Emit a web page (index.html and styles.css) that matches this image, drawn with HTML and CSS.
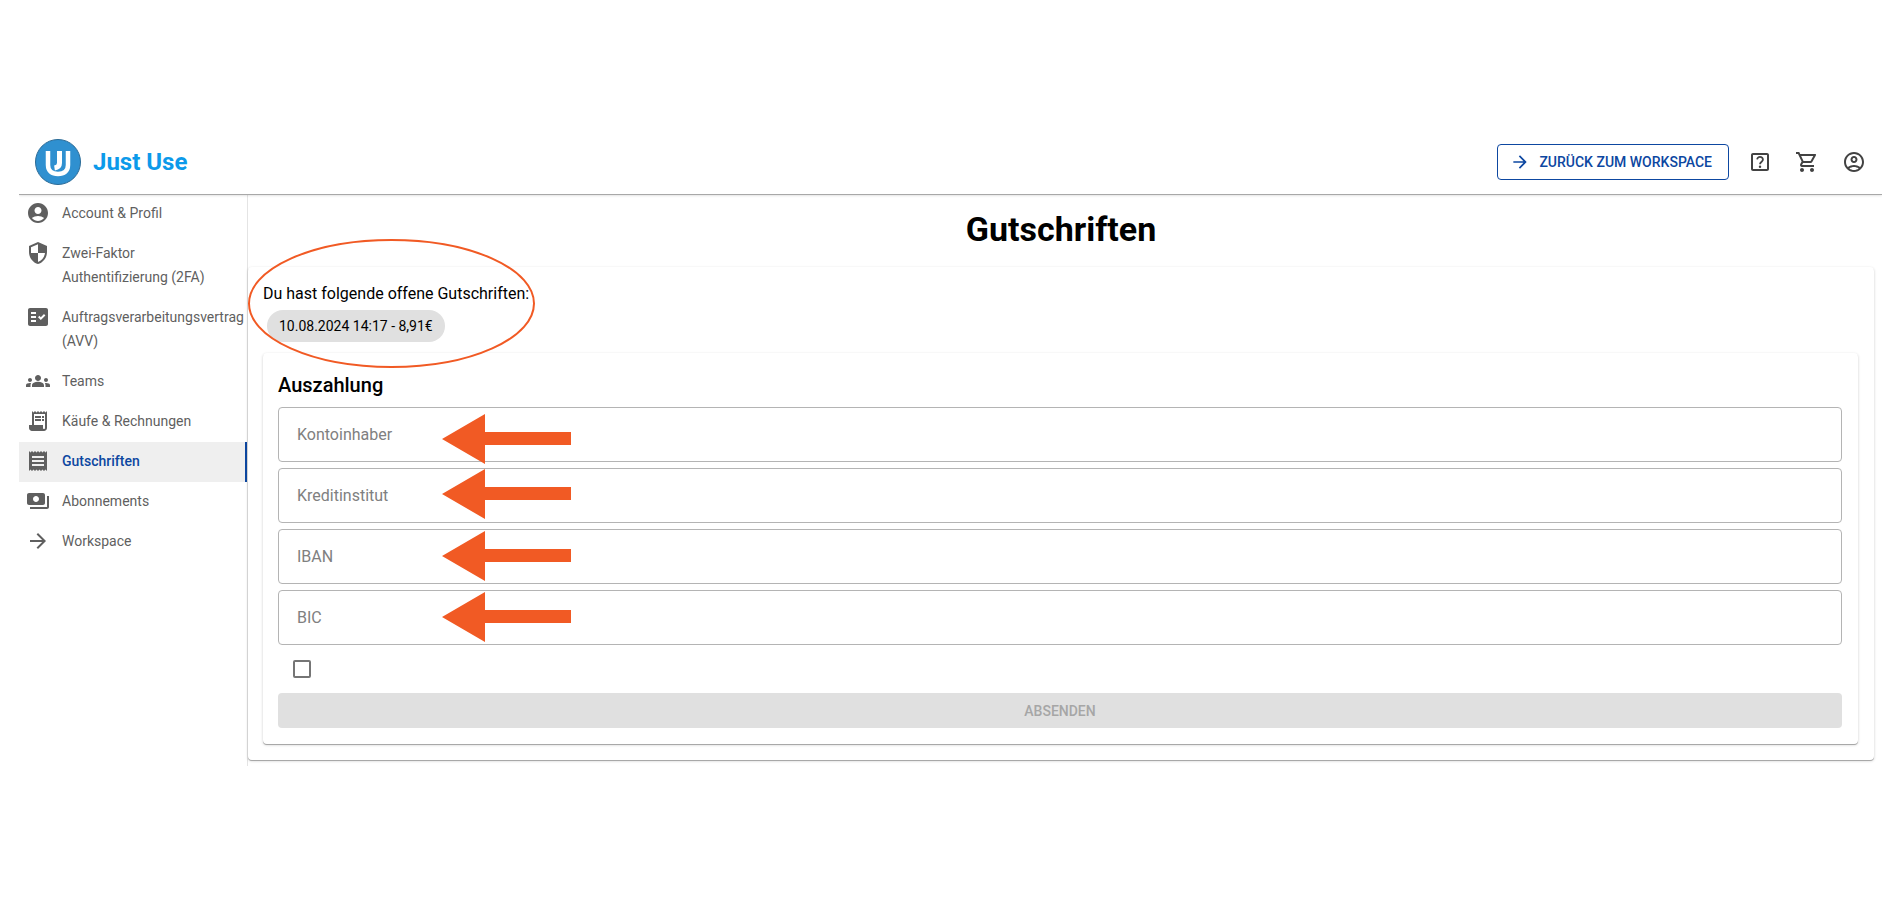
FILE: index.html
```
<!DOCTYPE html>
<html lang="de">
<head>
    <meta charset="UTF-8">
    <meta name="viewport" content="width=device-width, initial-scale=1.0">
    <title>Just Use - Gutschriften</title>
    <link rel="stylesheet" href="styles.css">
</head>
<body>

<header class="topbar">
    <a class="brand" href="#">
        <svg class="logo" viewBox="0 0 46 46" aria-hidden="true">
            <circle cx="23" cy="23" r="22.5" fill="#2f90d0" stroke="#2b6a96"/>
            <path d="M13 12v14c0 6 4 9 10 9s10-3 10-9V12" fill="none" stroke="#fff" stroke-width="4.500"/>
            <path d="M24.500 12v12c0 3-1.500 4.500-5 5" fill="none" stroke="#fff" stroke-width="5"/>
        </svg>
        <span class="brand-name">Just Use</span>
    </a>
    <div class="topbar-actions">
        <button class="back-button" type="button">
            <svg class="icon-small" viewBox="0 0 24 24"><path d="m12 4-1.410 1.410L16.170 11H4v2h12.170l-5.580 5.590L12 20l8-8z"/></svg>
            ZURÜCK ZUM WORKSPACE
        </button>
        <button class="icon-button" type="button" aria-label="Hilfe">
            <svg class="icon" viewBox="0 0 24 24"><path d="M19 3H5c-1.100 0-2 .9-2 2v14c0 1.100.9 2 2 2h14c1.100 0 2-.9 2-2V5c0-1.100-.9-2-2-2zm0 16H5V5h14v14zM12 15.500a1.200 1.200 0 1 0 0 2.500 1.200 1.200 0 0 0 0-2.500zM12 6c-2 0-3.500 1.300-3.700 3.200l1.700.4C10.100 8.500 10.900 7.700 12 7.700s2 .8 2 1.800c0 1.600-2.800 1.900-2.800 4.800H13c0-2 2.800-2.400 2.800-4.900C15.800 7.400 14.100 6 12 6z"/></svg>
        </button>
        <button class="icon-button" type="button" aria-label="Warenkorb">
            <svg class="icon" viewBox="0 0 24 24"><path d="M15.550 13c.75 0 1.410-.41 1.750-1.030l3.580-6.490A.996.996 0 0 0 20.010 4H5.210l-.94-2H1v2h2l3.600 7.590-1.350 2.440C4.520 15.370 5.480 17 7 17h12v-2H7l1.100-2h7.450zM6.160 6h12.150l-2.760 5H8.530L6.160 6zM7 18c-1.100 0-1.990.9-1.990 2S5.900 22 7 22s2-.9 2-2-.9-2-2-2zm10 0c-1.100 0-1.990.9-1.990 2s.89 2 1.990 2 2-.9 2-2-.9-2-2-2z"/></svg>
        </button>
        <button class="icon-button" type="button" aria-label="Konto">
            <svg class="icon" viewBox="0 0 24 24"><path d="M12 2C6.480 2 2 6.480 2 12s4.480 10 10 10 10-4.480 10-10S17.520 2 12 2zM7.350 18.500C8.660 17.560 10.260 17 12 17s3.340.56 4.650 1.500C15.340 19.440 13.740 20 12 20s-3.340-.56-4.650-1.500zm10.790-1.380C16.450 15.800 14.320 15 12 15s-4.450.8-6.140 2.120C4.700 15.730 4 13.950 4 12c0-4.420 3.580-8 8-8s8 3.580 8 8c0 1.950-.7 3.730-1.860 5.120zM12 6c-1.930 0-3.500 1.570-3.500 3.500S10.070 13 12 13s3.500-1.570 3.500-3.500S13.930 6 12 6zm0 5c-.83 0-1.500-.67-1.500-1.500S11.170 8 12 8s1.500.67 1.500 1.500S12.830 11 12 11z"/></svg>
        </button>
    </div>
</header>

<div class="layout">
    <nav class="sidebar">
        <a class="nav-item" href="#">
            <svg class="icon" viewBox="0 0 24 24"><path d="M12 2C6.480 2 2 6.480 2 12s4.480 10 10 10 10-4.480 10-10S17.520 2 12 2zm0 4c1.930 0 3.500 1.570 3.500 3.500S13.930 13 12 13s-3.500-1.570-3.500-3.500S10.070 6 12 6zm0 14c-2.030 0-4.430-.82-6.140-2.880C7.550 15.800 9.680 15 12 15s4.450.8 6.140 2.120C16.430 19.180 14.030 20 12 20z"/></svg>
            <span>Account &amp; Profil</span>
        </a>
        <a class="nav-item" href="#">
            <svg class="icon" viewBox="0 0 24 24"><path d="M12 1 3 5v6c0 5.550 3.840 10.740 9 12 5.160-1.260 9-6.450 9-12V5l-9-4zm0 10.990h7c-.53 4.120-3.280 7.790-7 8.940V12H5V6.300l7-3.110v8.800z"/></svg>
            <span>Zwei-Faktor Authentifizierung (2FA)</span>
        </a>
        <a class="nav-item" href="#">
            <svg class="icon" viewBox="0 0 24 24"><path fill-rule="evenodd" d="M20 3H4c-1.100 0-2 .9-2 2v14c0 1.100.9 2 2 2h16c1.100 0 2-.9 2-2V5c0-1.100-.9-2-2-2zM10 17H5v-2h5v2zm0-4H5v-2h5v2zm0-4H5V7h5v2zm4.820 6L12 12.160l1.410-1.410 1.410 1.420L17.990 9l1.420 1.420L14.820 15z"/></svg>
            <span>Auftragsverarbeitungsvertrag (AVV)</span>
        </a>
        <a class="nav-item" href="#">
            <svg class="icon" viewBox="0 0 24 24"><path d="M12 12.750c1.630 0 3.070.39 4.240.9 1.080.48 1.760 1.560 1.760 2.730V18H6v-1.610c0-1.180.68-2.260 1.760-2.730 1.170-.52 2.610-.91 4.240-.91zM4 13c1.100 0 2-.9 2-2s-.9-2-2-2-2 .9-2 2 .9 2 2 2zm1.130 1.100C4.760 14.040 4.390 14 4 14c-.99 0-1.930.21-2.780.58C.48 14.900 0 15.620 0 16.430V18h4.500v-1.610c0-.83.23-1.610.63-2.290zM20 13c1.100 0 2-.9 2-2s-.9-2-2-2-2 .9-2 2 .9 2 2 2zm4 3.430c0-.81-.48-1.530-1.220-1.850A6.950 6.950 0 0 0 20 14c-.39 0-.76.04-1.130.1.400.68.630 1.460.630 2.290V18H24v-1.570zM12 6c1.660 0 3 1.340 3 3s-1.340 3-3 3-3-1.340-3-3 1.340-3 3-3z"/></svg>
            <span>Teams</span>
        </a>
        <a class="nav-item" href="#">
            <svg class="icon" viewBox="0 0 24 24"><path d="M19.500 3.500 18 2l-1.500 1.500L15 2l-1.500 1.500L12 2l-1.500 1.500L9 2 7.500 3.500 6 2v14H3v3c0 1.660 1.340 3 3 3h12c1.660 0 3-1.340 3-3V2l-1.500 1.500zM19 19c0 .55-.45 1-1 1s-1-.45-1-1v-3H8V5h11v14z"/><path d="M9 7h6v2H9zm7 0h2v2h-2zm-7 3h6v2H9zm7 0h2v2h-2z"/></svg>
            <span>Käufe &amp; Rechnungen</span>
        </a>
        <a class="nav-item active" href="#" aria-current="page">
            <svg class="icon" viewBox="0 0 24 24"><path d="M18 17H6v-2h12v2zm0-4H6v-2h12v2zm0-4H6V7h12v2zM3 22l1.500-1.500L6 22l1.500-1.500L9 22l1.500-1.500L12 22l1.500-1.500L15 22l1.500-1.500L18 22l1.500-1.500L21 22V2l-1.500 1.500L18 2l-1.500 1.500L15 2l-1.500 1.500L12 2l-1.500 1.500L9 2 7.500 3.500 6 2 4.500 3.500 3 2v20z"/></svg>
            <span>Gutschriften</span>
        </a>
        <a class="nav-item" href="#">
            <svg class="icon" viewBox="0 0 24 24"><path d="M19 14V6c0-1.100-.9-2-2-2H3c-1.100 0-2 .9-2 2v8c0 1.100.9 2 2 2h14c1.100 0 2-.9 2-2zm-9-1c-1.660 0-3-1.340-3-3s1.340-3 3-3 3 1.340 3 3-1.340 3-3 3zm13-6v11c0 1.100-.9 2-2 2H4v-2h17V7h2z"/></svg>
            <span>Abonnements</span>
        </a>
        <a class="nav-item" href="#">
            <svg class="icon" viewBox="0 0 24 24"><path d="m12 4-1.410 1.410L16.170 11H4v2h12.170l-5.580 5.590L12 20l8-8z"/></svg>
            <span>Workspace</span>
        </a>
    </nav>

    <main class="content">
        <h1>Gutschriften</h1>

        <section class="card credits">
            <p class="intro">Du hast folgende offene Gutschriften:</p>
            <span class="chip">10.08.2024 14:17 - 8,91€</span>

            <form class="card payout">
                <h2>Auszahlung</h2>
                <div class="field">
                    <input id="owner" type="text">
                    <label for="owner">Kontoinhaber</label>
                </div>
                <div class="field">
                    <input id="bank" type="text">
                    <label for="bank">Kreditinstitut</label>
                </div>
                <div class="field">
                    <input id="iban" type="text">
                    <label for="iban">IBAN</label>
                </div>
                <div class="field">
                    <input id="bic" type="text">
                    <label for="bic">BIC</label>
                </div>
                <input class="confirm" type="checkbox" aria-label="Bestätigen">
                <button class="submit" type="submit" disabled>ABSENDEN</button>
            </form>
        </section>

        <!-- markers drawn over the form -->
        <svg class="markers" width="340" height="420" viewBox="0 0 340 420" aria-hidden="true">
            <defs>
                <path id="arrow" d="M0 25 43 0V18H129V31H43V50z"/>
            </defs>
            <ellipse cx="143.500" cy="65.500" rx="142.500" ry="63.500"/>
            <use href="#arrow" x="194" y="176"/>
            <use href="#arrow" x="194" y="231"/>
            <use href="#arrow" x="194" y="293"/>
            <use href="#arrow" x="194" y="354"/>
        </svg>
    </main>
</div>

</body>
</html>
```
FILE: styles.css
```
* {
    box-sizing: border-box;
}
body {
    margin: 0;
    padding: 130px 18px 0 19px;
    font-family: Roboto, sans-serif;
    font-size: 16px;
    line-height: 24px;
    color: #000;
    background-color: #fff;
}
button, input {
    font-family: inherit;
}
.icon {
    width: 24px;
    height: 24px;
    flex-shrink: 0;
    fill: currentColor;
}
.icon-small {
    width: 20px;
    height: 20px;
    fill: currentColor;
}

/* header */
.topbar {
    position: relative;
    z-index: 1;
    display: flex;
    justify-content: space-between;
    align-items: center;
    height: 64px;
    padding: 0 8px 0 16px;
    background-color: #fff;
    box-shadow: 0 1px 0 #a8a8a8, 0 1px 3px rgba(0, 0, 0, 0.2);
    clip-path: inset(0 0 -4px 0);
}
.brand {
    display: flex;
    align-items: center;
    gap: 12px;
    color: #0c9aea;
    text-decoration: none;
}
.logo {
    width: 46px;
    height: 46px;
}
.brand-name {
    font-size: 24px;
    font-weight: 700;
}
.topbar-actions {
    display: flex;
    align-items: center;
    gap: 7px;
}
.back-button {
    display: flex;
    align-items: center;
    gap: 9px;
    height: 36px;
    margin-right: 4px;
    padding: 0 16px 0 12px;
    border: 1px solid #0d47a1;
    border-radius: 4px;
    background: none;
    color: #0d47a1;
    font-size: 14px;
    font-weight: 500;
    cursor: pointer;
}
.icon-button {
    display: flex;
    padding: 8px;
    border: none;
    background: none;
    color: #424242;
    cursor: pointer;
}

/* sidebar */
.layout {
    display: flex;
}
.sidebar {
    width: 229px;
    flex-shrink: 0;
    border-right: 1px solid #e4e4e4;
}
.nav-item {
    display: flex;
    gap: 12px;
    padding: 7px 4px 9px 7px;
    color: #5f5f5f;
    font-size: 14px;
    text-decoration: none;
}
.nav-item span {
    max-width: 150px;
}
.nav-item.active {
    background-color: #efefef;
    border-right: 2px solid #0d47a1;
}
.nav-item.active span {
    color: #0d47a1;
    font-weight: 500;
}

/* content */
.content {
    position: relative;
    flex: 1;
    padding: 0 8px 6px 0;
}
h1 {
    margin: 0;
    padding: 15px 0 18px;
    font-size: 34px;
    line-height: 40px;
    font-weight: 700;
    text-align: center;
}
.card {
    border-radius: 4px;
    background-color: #fff;
    box-shadow: 0 1px 0 #a8a8a8, 0 1px 3px rgba(0, 0, 0, 0.2);
}
.credits {
    padding: 15px 16px 16px 15px;
}
.intro {
    margin: 0 0 4px;
}
.chip {
    display: flex;
    align-items: center;
    width: fit-content;
    height: 32px;
    margin-left: 4px;
    padding: 0 12px;
    border-radius: 16px;
    background-color: #e0e0e0;
    font-size: 14px;
}
.payout {
    display: flex;
    flex-direction: column;
    gap: 6px;
    margin-top: 11px;
    padding: 16px 16px 16px 15px;
}
h2 {
    margin: 0;
    font-size: 20px;
    line-height: 32px;
    font-weight: 500;
}
.field {
    display: grid;
}
.field input,
.field label {
    grid-area: 1 / 1;
}
.field input {
    width: 100%;
    height: 55px;
    padding: 0 18px;
    border: 1px solid #b4b4b4;
    border-radius: 4px;
    outline: none;
    font-size: 16px;
}
.field label {
    align-self: center;
    justify-self: start;
    margin-left: 19px;
    color: #808080;
    pointer-events: none;
}
.confirm {
    appearance: none;
    width: 18px;
    height: 18px;
    margin: 9px 15px;
    border: 2px solid #757575;
    border-radius: 2px;
}
.submit {
    height: 35px;
    border: none;
    border-radius: 4px;
    background-color: #e0e0e0;
    color: #a6a6a6;
    font-size: 14px;
    font-weight: 500;
}
.markers {
    position: absolute;
    top: 44px;
    left: 0;
    fill: #f15a24;
    pointer-events: none;
}
.markers ellipse {
    fill: none;
    stroke: #f15a24;
    stroke-width: 2;
}
```
